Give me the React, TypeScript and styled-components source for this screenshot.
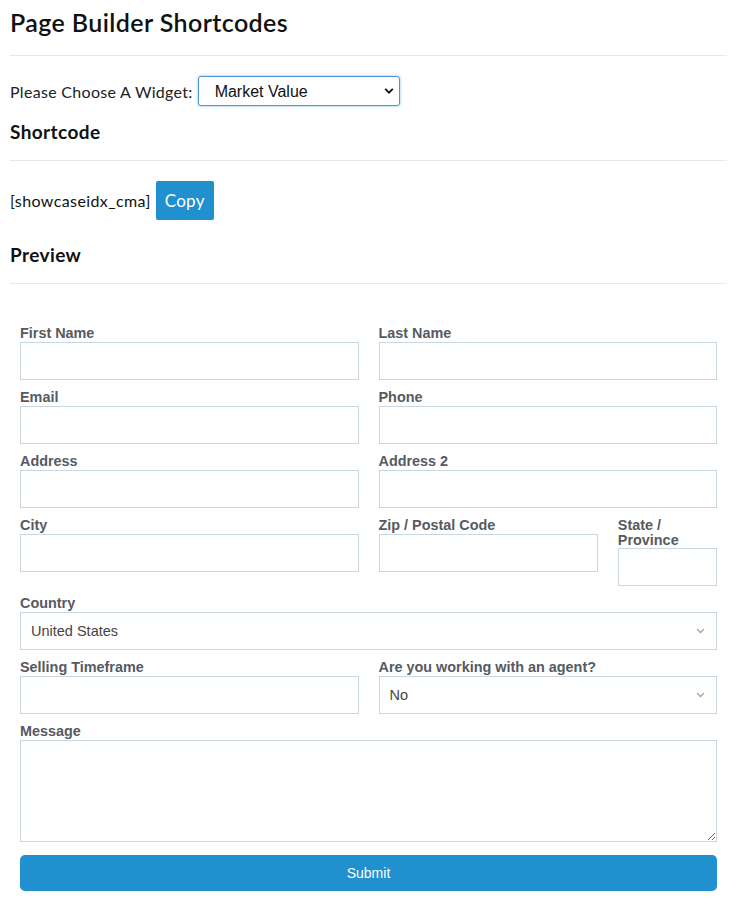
import React from "react";
import styled, { createGlobalStyle } from "styled-components";

const GlobalStyle = createGlobalStyle`
  html, body { margin: 0; padding: 0; background: #fff; }
  body { font-family: "Lato", "Noto Sans", sans-serif; color: #1d1d1f; }
  * { box-sizing: border-box; }
`;

const Page = styled.div`
  padding: 0 13px 20px 10px;
`;

const Title = styled.h1`
  margin: 0;
  font-size: 25px;
  font-weight: 600;
  letter-spacing: 0.4px;
  line-height: 44px;
  padding-bottom: 11px;
  color: #111;
`;

const Rule = styled.hr`
  margin: 0;
  border: 0;
  border-top: 1px solid #e8e8e8;
  height: 0;
`;

const WidgetRow = styled.div`
  display: flex;
  align-items: center;
  gap: 5px;
  margin-top: 20px;
  height: 30px;
  font-size: 16px;
  letter-spacing: 0.3px;
  color: #222;
`;

const SelectWrap = styled.div<{ $w?: string }>`
  position: relative;
  width: ${(p) => p.$w || "100%"};
`;

const WidgetSelect = styled.select`
  appearance: none;
  width: 202px;
  height: 30px;
  border: 1px solid #4f94d4;
  border-radius: 3px;
  box-shadow: 0 0 3px rgba(30, 140, 200, 0.55);
  background: #fff;
  padding: 0 0 0 16px;
  font-family: "Liberation Sans", Arial, sans-serif;
  font-size: 16px;
  color: #111;
  outline: none;
`;

const Chevron = styled.svg<{ $right: number }>`
  position: absolute;
  right: ${(p) => p.$right}px;
  top: 50%;
  transform: translateY(-50%);
  pointer-events: none;
`;

const SubTitle = styled.h2<{ $mt: number }>`
  margin: ${(p) => p.$mt}px 0 16px;
  font-size: 19px;
  font-weight: 700;
  letter-spacing: 0.4px;
  line-height: 24px;
  color: #111;
`;

const CodeRow = styled.div`
  display: flex;
  align-items: center;
  gap: 5px;
  margin-top: 20px;
  font-size: 16px;
  letter-spacing: 0.4px;
  color: #111;
`;

const CopyButton = styled.button`
  height: 39px;
  width: 58px;
  padding: 0;
  border: 0;
  border-radius: 2px;
  background: #2190ce;
  color: #fff;
  font-family: "Lato", "Noto Sans", sans-serif;
  font-size: 17px;
  letter-spacing: 0.3px;
`;

const Form = styled.form`
  margin-top: 42px;
  padding: 0 10px;
  font-family: "Liberation Sans", Arial, sans-serif;
`;

const Grid = styled.div<{ $cols: string }>`
  display: grid;
  grid-template-columns: ${(p) => p.$cols};
  column-gap: 20px;
  align-items: start;
`;

const Field = styled.div`
  margin-bottom: 10px;
  min-width: 0;
`;

const Label = styled.label<{ $tight?: boolean }>`
  display: block;
  font-size: 14.4px;
  font-weight: 700;
  line-height: 15px;
  margin-bottom: ${(p) => (p.$tight ? 0 : 1)}px;
  color: #565a63;
`;

const Input = styled.input`
  display: block;
  width: 100%;
  height: 38px;
  border: 1px solid #c9d8de;
  border-radius: 0;
  background: #fff;
  padding: 0 10px;
  font-family: inherit;
  font-size: 14.5px;
  outline: none;
`;

const Select = styled.select`
  appearance: none;
  display: block;
  width: 100%;
  height: 38px;
  border: 1px solid #c9d8de;
  border-radius: 0;
  background: #fff;
  padding: 0 10px;
  font-family: inherit;
  font-size: 14.5px;
  color: #444;
  outline: none;
`;

const TextArea = styled.textarea`
  display: block;
  width: 100%;
  height: 102px;
  border: 1px solid #c9d8de;
  border-radius: 0;
  padding: 8px 10px;
  font-family: inherit;
  font-size: 14px;
  outline: none;
`;

const Submit = styled.button`
  display: block;
  width: 100%;
  height: 36px;
  margin-top: 13px;
  border: 0;
  border-radius: 5px;
  background: #2190ce;
  color: #fff;
  font-family: "Liberation Sans", Arial, sans-serif;
  font-size: 14px;
`;

const SmallChevron = ({ color = "#9aa6ad" }: { color?: string }) => (
  <Chevron $right={12} width="9" height="6" viewBox="0 0 9 6">
    <path d="M1 1l3.5 3.5L8 1" fill="none" stroke={color} strokeWidth="1.3" />
  </Chevron>
);

const TextField = ({ label }: { label: string }) => (
  <Field>
    <Label>{label}</Label>
    <Input type="text" />
  </Field>
);

export default function App() {
  return (
    <>
      <GlobalStyle />
      <Page>
        <Title>Page Builder Shortcodes</Title>
        <Rule />
        <WidgetRow>
          <span>Please Choose A Widget:</span>
          <SelectWrap $w="202px">
            <WidgetSelect defaultValue="cma">
              <option value="cma">Market Value</option>
            </WidgetSelect>
            <Chevron $right={6} width="10" height="7" viewBox="0 0 10 7">
              <path d="M1.2 1.4L5 5.2l3.8-3.8" fill="none" stroke="#111" strokeWidth="1.8" />
            </Chevron>
          </SelectWrap>
        </WidgetRow>
        <SubTitle $mt={14}>Shortcode</SubTitle>
        <Rule />
        <CodeRow>
          <span>[showcaseidx_cma]</span>
          <CopyButton type="button">Copy</CopyButton>
        </CodeRow>
        <SubTitle $mt={23}>Preview</SubTitle>
        <Rule />
        <Form onSubmit={(e) => e.preventDefault()}>
          <Grid $cols="1fr 1fr">
            <TextField label="First Name" />
            <TextField label="Last Name" />
            <TextField label="Email" />
            <TextField label="Phone" />
            <TextField label="Address" />
            <TextField label="Address 2" />
            <TextField label="City" />
            <Grid $cols="219fr 99fr">
              <TextField label="Zip / Postal Code" />
              <Field>
                <Label $tight>
                  State /<br />Province
                </Label>
                <Input type="text" />
              </Field>
            </Grid>
          </Grid>
          <Field>
            <Label>Country</Label>
            <SelectWrap>
              <Select defaultValue="us">
                <option value="us">United States</option>
              </Select>
              <SmallChevron />
            </SelectWrap>
          </Field>
          <Grid $cols="1fr 1fr">
            <TextField label="Selling Timeframe" />
            <Field>
              <Label>Are you working with an agent?</Label>
              <SelectWrap>
                <Select defaultValue="no">
                  <option value="no">No</option>
                  <option value="yes">Yes</option>
                </Select>
                <SmallChevron />
              </SelectWrap>
            </Field>
          </Grid>
          <Field>
            <Label>Message</Label>
            <TextArea />
          </Field>
          <Submit type="submit">Submit</Submit>
        </Form>
      </Page>
    </>
  );
}
